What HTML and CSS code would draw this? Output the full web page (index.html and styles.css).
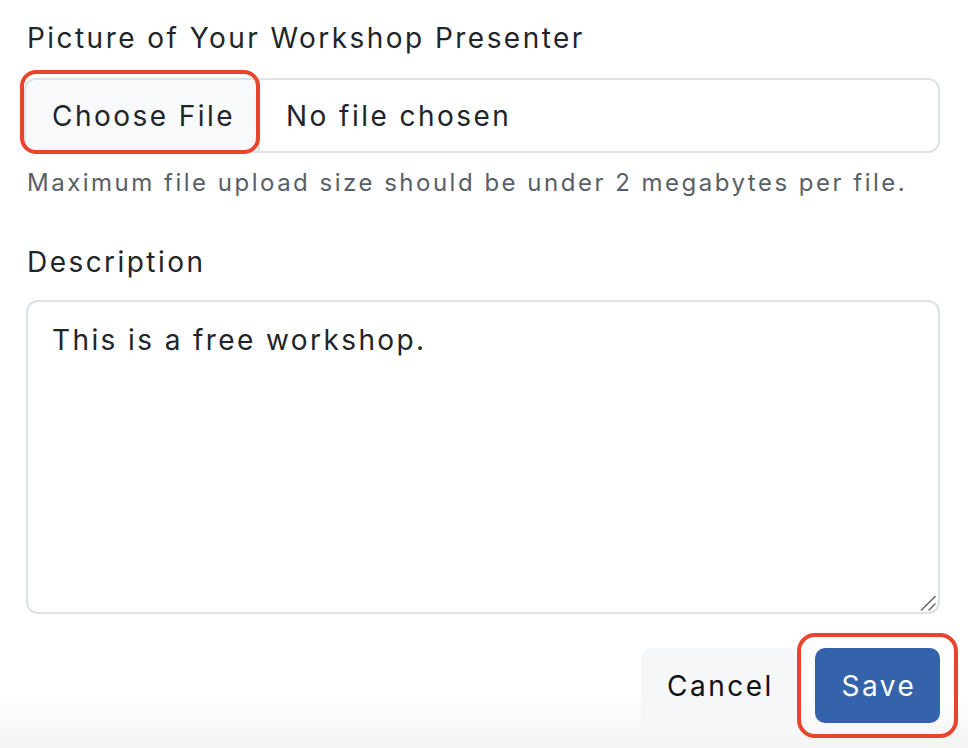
FILE: index.html
```html
<!DOCTYPE html>
<html lang="en">
<head>
<meta charset="utf-8">
<title>Workshop form</title>
<link rel="stylesheet" href="styles.css">
</head>
<body>
<form class="form">
  <div class="field">
    <label class="label">Picture of Your Workshop Presenter</label>
    <div class="file-input">
      <span class="file-btn highlight">Choose File</span>
      <span class="file-name">No file chosen</span>
    </div>
    <p class="help">Maximum file upload size should be under 2 megabytes per file.</p>
  </div>
  <div class="field desc-field">
    <label class="label" for="desc">Description</label>
    <div class="textarea-wrap">
      <textarea id="desc" class="textarea">This is a free workshop.</textarea>
      <svg class="grip" width="16" height="16" viewBox="0 0 16 16" aria-hidden="true">
        <line x1="1.5" y1="15" x2="15" y2="1.5" stroke="#6b6b6b" stroke-width="1.6" stroke-linecap="round"/>
        <line x1="9" y1="15" x2="15" y2="9" stroke="#6b6b6b" stroke-width="1.6" stroke-linecap="round"/>
      </svg>
    </div>
  </div>
  <div class="actions">
    <button type="button" class="btn btn-cancel">Cancel</button>
    <span class="save-wrap highlight"><button type="button" class="btn btn-save">Save</button></span>
  </div>
</form>
</body>
</html>
```
FILE: styles.css
```css
html {
  background: linear-gradient(to bottom, #ffffff 0, #ffffff 695px, #f3f3f3 748px);
  min-height: 100%;
}
body {
  margin: 0;
  font-family: Inter, "Open Sans", sans-serif;
  color: #212529;
  letter-spacing: 2.45px;
}
.form {
  padding: 17px 28px 25px 24px;
  display: flex;
  flex-direction: column;
}
.label {
  display: block;
  font-size: 28px;
  line-height: 42px;
  padding-left: 3px;
  color: #212529;
}
.file-input {
  margin-top: 19px;
  height: 75px;
  box-sizing: border-box;
  border: 2px solid #dee2e6;
  border-radius: 12px;
  display: flex;
  align-items: stretch;
  background: #fff;
}
.file-btn {
  width: 234px;
  box-sizing: border-box;
  background: #f8f9fa;
  border-right: 2px solid #dee2e6;
  border-radius: 10px 0 0 10px;
  display: flex;
  align-items: center;
  justify-content: center;
  font-size: 28px;
  padding-left: 3px;
}
.file-name {
  display: flex;
  align-items: center;
  padding-left: 26px;
  font-size: 28px;
}
.help {
  margin: 12px 0 0 3px;
  font-size: 24px;
  line-height: 36px;
  color: #595f66;
  letter-spacing: 2.5px;
}
.desc-field {
  margin-top: 40px;
}
.textarea-wrap {
  position: relative;
  margin: 17px 0 0 2px;
  width: 914px;
}
.textarea {
  display: block;
  width: 914px;
  height: 314px;
  box-sizing: border-box;
  border: 2px solid #dee2e6;
  border-radius: 12px;
  padding: 17px 24px;
  font-family: inherit;
  font-size: 28px;
  line-height: 42px;
  letter-spacing: 2.4px;
  color: #212529;
  background: #fff;
  resize: none;
  outline: none;
}
.grip {
  position: absolute;
  right: 4px;
  bottom: 3px;
}
.actions {
  margin-top: 34px;
  display: flex;
  justify-content: flex-end;
  align-items: center;
  gap: 18px;
}
.btn {
  height: 75px;
  border: none;
  border-radius: 10px;
  font-family: inherit;
  font-size: 28px;
  letter-spacing: 2.5px;
  padding: 0 0 0 3px;
}
.btn-cancel {
  width: 156px;
  background: #f6f7f9;
  color: #111;
}
.save-wrap {
  display: flex;
}
.btn-save {
  width: 125px;
  background: #3563ab;
  color: #fff;
}
.highlight {
  position: relative;
}
.highlight::after {
  content: "";
  position: absolute;
  border: 4px solid #e8452c;
  pointer-events: none;
}
.file-btn.highlight::after {
  left: -6px;
  top: -10px;
  right: -2px;
  bottom: -3px;
  border-radius: 16px;
}
.save-wrap.highlight::after {
  left: -18px;
  top: -15px;
  right: -18px;
  bottom: -15px;
  border-radius: 18px;
}
```
